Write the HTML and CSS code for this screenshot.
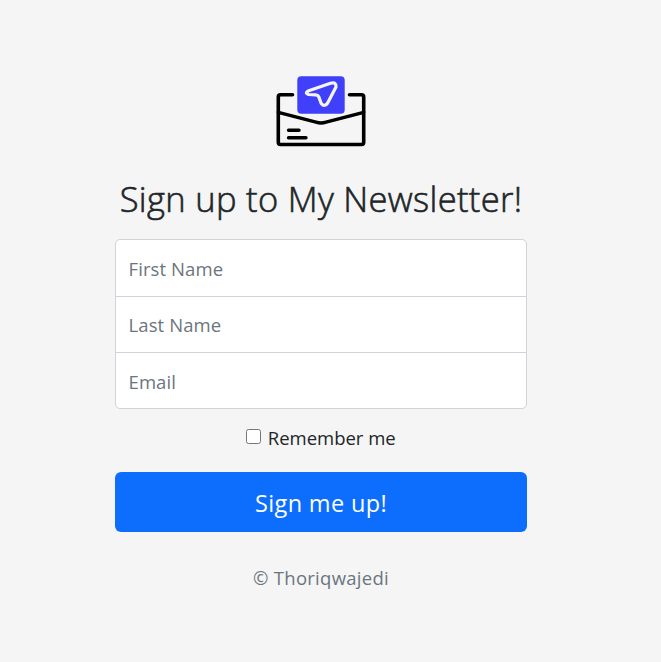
FILE: index.html
```html
<!DOCTYPE html>
<html lang="en">
<head>
<meta charset="utf-8">
<title>Newsletter Signup</title>
<link rel="stylesheet" href="styles.css">
</head>
<body>
<main class="form-signin">
  <form>
    <svg class="logo" width="92" height="74" viewBox="0 0 92 74" fill="none" stroke-linecap="round" stroke-linejoin="round">
      <path d="M17.5 19.8H5.5Q3.3 19.8 3.3 22V67.3Q3.3 69.5 5.5 69.5H86.5Q88.7 69.5 88.7 67.3V22Q88.7 19.8 86.5 19.8H74.5" stroke="#000" stroke-width="3.6"/>
      <path d="M3.3 37.3 41 47.2Q46 48.8 51 47.2L88.7 37.3M13.5 55.2H24M13.5 62.8H31" stroke="#000" stroke-width="3.4"/>
      <rect x="22.3" y="1.3" width="47.4" height="37.4" rx="4" fill="#403ffa"/>
      <path d="M33 16.1 55.5 8.3Q61.5 6.5 61 12L52.5 28.3Q49.5 32.5 46.2 28.5L43.7 21.6Q43 20 40.5 19.8L33.5 19.5Q29.5 18 33 16.1Z" stroke="#f5f5f5" stroke-width="3.2"/>
    </svg>
    <h1>Sign up to My Newsletter!</h1>
    <div class="fields">
      <input type="text" placeholder="First Name" aria-label="First Name">
      <input type="text" placeholder="Last Name" aria-label="Last Name">
      <input type="email" placeholder="Email" aria-label="Email">
    </div>
    <label class="remember"><input type="checkbox"><span>Remember me</span></label>
    <button type="submit">Sign me up!</button>
    <p class="copyright">© Thoriqwajedi</p>
  </form>
</main>
</body>
</html>
```
FILE: styles.css
```css
* { box-sizing: border-box; }
body {
  margin: 0;
  height: 662px;
  padding-right: 19px;
  overflow: hidden;
  background: #f5f5f5;
  color: #212529;
  font-family: "Open Sans", "Noto Sans", sans-serif;
  font-size: 18.5px;
}
.form-signin { width: 412px; margin: 0 auto; padding-top: 75px; }
form { display: flex; flex-direction: column; align-items: center; }
.logo { display: block; }
h1 {
  margin: 28px 0 0;
  height: 44px;
  font-size: 34.5px;
  line-height: 44px;
  font-weight: 300;
  -webkit-text-stroke: 0.6px #212529;
  letter-spacing: 0.33px;
  white-space: nowrap;
}
.fields {
  width: 412px;
  height: 170px;
  margin-top: 18px;
  display: grid;
  grid-template-rows: 57px 56px 55px;
  border: 1px solid #ced4da;
  border-radius: 5px;
  background: #fff;
  overflow: hidden;
}
.fields input {
  width: 100%;
  min-width: 0;
  border: 0;
  border-bottom: 1px solid #ced4da;
  padding: 1px 12.5px 0;
  background: transparent;
  font: inherit;
  letter-spacing: 0.1px;
  outline: 0;
}
.fields input:nth-child(2) { padding-top: 0; padding-bottom: 1px; }
.fields input:last-child { border-bottom: 0; }
.fields input::placeholder { color: #6c757d; opacity: 1; }
.remember {
  height: 30px;
  margin-top: 14px;
  display: flex;
  align-items: center;
  line-height: 30px;
  white-space: nowrap;
}
.remember input { width: 15px; height: 15px; margin: 0 6.5px 3px 0; }
button {
  width: 412px;
  height: 60px;
  margin: 19px 0 0;
  padding: 2px 0 0;
  border: 0;
  border-radius: 6px;
  background: #0d6efd;
  color: #fff;
  font: inherit;
  font-size: 23.5px;
  letter-spacing: 0.35px;
}
.copyright {
  margin: 31px 0 0;
  line-height: 30px;
  letter-spacing: 0.27px;
  color: #6c757d;
  white-space: nowrap;
}
```
